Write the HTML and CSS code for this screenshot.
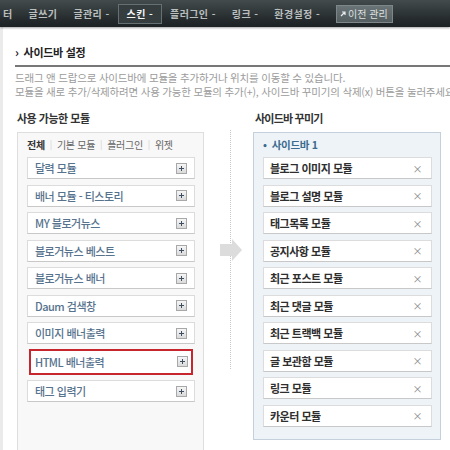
FILE: index.html
```html
<!DOCTYPE html>
<html lang="ko">
<head>
<meta charset="utf-8">
<title>사이드바 설정</title>
<link rel="stylesheet" href="styles.css">
</head>
<body>
<div class="nav">
  <span class="nav-item nav-first">터</span>
  <span class="nav-item">글쓰기</span>
  <span class="nav-item">글관리 -</span>
  <span class="nav-item nav-active">스킨 -</span>
  <span class="nav-item">플러그인 -</span>
  <span class="nav-item">링크 -</span>
  <span class="nav-item">환경설정 -</span>
  <span class="nav-btn"><svg class="nav-arrow" width="6" height="6" viewBox="0 0 6 6"><path d="M1 5 L5 1 M2 1 H5 V4" stroke="#e8ecec" stroke-width="1.2" fill="none"/></svg>이전 관리</span>
</div>
<div class="main">
  <h2 class="title"><span class="chev">›</span>사이드바 설정</h2>
  <p class="desc">드래그 앤 드랍으로 사이드바에 모듈을 추가하거나 위치를 이동할 수 있습니다.<br>모듈을 새로 추가/삭제하려면 사용 가능한 모듈의 추가(+), 사이드바 꾸미기의 삭제(x) 버튼을 눌러주세요</p>
  <div class="cols">
    <div class="col col-left">
      <h3 class="sec-title">사용 가능한 모듈</h3>
      <div class="panel panel-avail">
        <div class="tabs"><span class="tab tab-on">전체</span><span class="sep">|</span><span class="tab">기본 모듈</span><span class="sep">|</span><span class="tab">플러그인</span><span class="sep">|</span><span class="tab">위젯</span></div>
        <ul class="list">
          <li class="mod"><span>달력 모듈</span><span class="add"></span></li>
          <li class="mod"><span>배너 모듈 - 티스토리</span><span class="add"></span></li>
          <li class="mod"><span>MY 블로거뉴스</span><span class="add"></span></li>
          <li class="mod"><span>블로거뉴스 베스트</span><span class="add"></span></li>
          <li class="mod"><span>블로거뉴스 배너</span><span class="add"></span></li>
          <li class="mod"><span>Daum 검색창</span><span class="add"></span></li>
          <li class="mod"><span>이미지 배너출력</span><span class="add"></span></li>
          <li class="mod mod-hl"><span>HTML 배너출력</span><span class="add"></span></li>
          <li class="mod"><span>태그 입력기</span><span class="add"></span></li>
        </ul>
      </div>
    </div>
    <div class="col-mid">
      <svg class="arrow" width="22" height="22" viewBox="0 0 22 22"><polygon points="0,5 12,5 12,0 22,11 12,22 12,17 0,17" fill="#dcdcdc"/></svg>
    </div>
    <div class="col col-right">
      <h3 class="sec-title sec-title-r">사이드바 꾸미기</h3>
      <div class="panel panel-side">
        <div class="side-head"><span class="bullet">•</span>사이드바 1</div>
        <ul class="list">
          <li class="mod mod-r"><span>블로그 이미지 모듈</span><span class="del">×</span></li>
          <li class="mod mod-r"><span>블로그 설명 모듈</span><span class="del">×</span></li>
          <li class="mod mod-r"><span>태그목록 모듈</span><span class="del">×</span></li>
          <li class="mod mod-r"><span>공지사항 모듈</span><span class="del">×</span></li>
          <li class="mod mod-r"><span>최근 포스트 모듈</span><span class="del">×</span></li>
          <li class="mod mod-r"><span>최근 댓글 모듈</span><span class="del">×</span></li>
          <li class="mod mod-r"><span>최근 트랙백 모듈</span><span class="del">×</span></li>
          <li class="mod mod-r"><span>글 보관함 모듈</span><span class="del">×</span></li>
          <li class="mod mod-r"><span>링크 모듈</span><span class="del">×</span></li>
          <li class="mod mod-r"><span>카운터 모듈</span><span class="del">×</span></li>
        </ul>
      </div>
    </div>
  </div>
</div>
</body>
</html>
```
FILE: styles.css
```css
* { box-sizing: border-box; }
html, body { margin: 0; padding: 0; }
body {
  background: #fff;
  font-family: "Noto Sans CJK KR", "Noto Sans", sans-serif;
  color: #333;
  overflow: hidden;
  width: 450px;
  height: 450px;
}
.nav {
  height: 27px;
  background: linear-gradient(#434b4d, #262c2e 70%, #1d2224);
  display: flex;
  align-items: center;
  box-shadow: 0 1px 2px rgba(0,0,0,0.35);
  position: relative;
  white-space: nowrap;
}
.nav-item {
  font-size: 10px;
  font-weight: 700;
  color: #b9bebe;
  padding: 0 7px;
  line-height: 18px;
  letter-spacing: 0.4px;
  border: 1px solid transparent;
}
.nav-first { padding-left: 2px; }
.nav-active {
  color: #f4f6f6;
  border-color: #667072;
  background: #353d3f;
  padding: 0 8px;
}
.nav-btn {
  margin-left: 8px;
  font-size: 10px;
  color: #dde1e1;
  background: linear-gradient(#6a7476, #545e60);
  border: 1px solid #7d8789;
  line-height: 16px;
  padding: 0 4px 0 3px;
  display: flex;
  align-items: center;
  gap: 2px;
}
.nav-arrow { display: block; }
.main {
  border-left: 3px solid #ebebeb;
  padding: 17px 0 0 12px;
  height: 423px;
}
.title {
  margin: 0;
  font-size: 11px;
  font-weight: 700;
  line-height: 16px;
  color: #222;
  letter-spacing: -0.3px;
  padding-bottom: 5px;
  border-bottom: 2px solid #777;
}
.chev { font-size: 12px; margin-right: 5px; font-weight: 700; }
.desc {
  margin: 4px 0 0;
  font-size: 10.5px;
  line-height: 14px;
  color: #9b9b9b;
  letter-spacing: -0.2px;
  white-space: nowrap;
}
.cols {
  display: flex;
  align-items: flex-start;
  margin-top: 11px;
  margin-left: 2px;
}
.col-left { width: 187px; }
.col-right { width: 188px; }
.sec-title {
  margin: 0 0 6px;
  font-size: 11px;
  font-weight: 700;
  line-height: 16px;
  color: #333;
  letter-spacing: -0.5px;
}
.sec-title-r { padding-left: 2px; letter-spacing: -0.8px; }
.col-mid {
  width: 49px;
  height: 240px;
  margin-top: 20px;
  display: flex;
  align-items: center;
  justify-content: center;
  padding-left: 4px;
  background-image: linear-gradient(to bottom, #c6c6c6 50%, transparent 50%);
  background-size: 1px 2px;
  background-repeat: repeat-y;
  background-position: 26px 0;
}
.arrow { display: block; }
.panel { border: 1px solid #dedede; }
.panel-avail {
  background: #f8f8f8;
  padding: 5px 8px 0 9px;
  min-height: 330px;
}
.panel-side {
  background: #eef3f8;
  border-color: #c4d1dc;
  padding: 5px 8px 12px 9px;
}
.tabs {
  font-size: 10px;
  line-height: 14px;
  color: #666;
  letter-spacing: -0.3px;
  display: flex;
  align-items: center;
}
.tab-on { font-weight: 700; color: #333; }
.sep { color: #d0d0d0; margin: 0 5px; font-size: 9px; }
.side-head {
  font-size: 10.5px;
  font-weight: 700;
  line-height: 14px;
  color: #3a6b90;
  letter-spacing: -0.3px;
}
.bullet { margin-right: 5px; }
.list {
  list-style: none;
  margin: 5px 0 0;
  padding: 0;
  display: flex;
  flex-direction: column;
  gap: 5.5px;
}
.mod {
  height: 22px;
  background: #fff;
  border: 1px solid #dcdcdc;
  border-bottom-color: #c8c8c8;
  display: flex;
  align-items: center;
  justify-content: space-between;
  padding: 0 7px 0 7px;
  font-size: 11px;
  font-weight: 500;
  color: #56728d;
  letter-spacing: -0.5px;
  white-space: nowrap;
}
.mod-hl {
  height: 26px;
  border: 2px solid #c7262e;
  margin: -1px 2px 0;
  padding: 0 3px 0 4px;
}
.mod-r {
  color: #2e2e2e;
  font-weight: 700;
  padding: 0 9px 0 6px;
}
.add {
  width: 11px;
  height: 11px;
  border: 1px solid #a8a8a8;
  background: linear-gradient(#f6f6f6, #dadada);
  position: relative;
  flex: none;
}
.add::before, .add::after {
  content: "";
  position: absolute;
  background: #3d4f63;
}
.add::before { left: 2px; top: 4px; width: 5px; height: 1px; }
.add::after { left: 4px; top: 2px; width: 1px; height: 5px; }
.del {
  font-size: 10px;
  color: #8a8a8a;
  font-weight: 400;
}
```
